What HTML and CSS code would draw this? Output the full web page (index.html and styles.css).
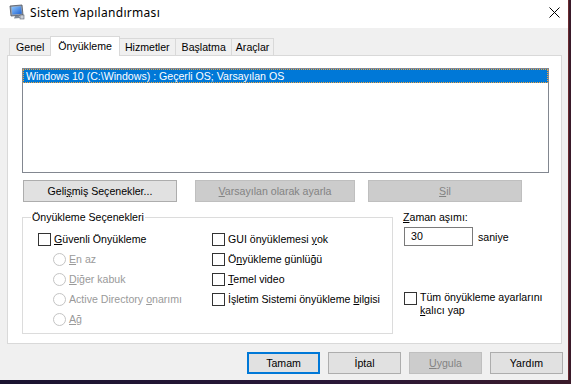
FILE: index.html
```html
<!DOCTYPE html>
<html lang="tr">
<head>
    <meta charset="UTF-8">
    <title>Sistem Yapılandırması</title>
    <link rel="stylesheet" href="styles.css">
</head>
<body>
    <div class="window">
        <div class="titlebar">
            <svg class="app-icon" width="16" height="16" viewBox="0 0 16 16">
                <defs>
                    <linearGradient id="scr" x1="0" y1="0" x2="1" y2="1">
                        <stop offset="0" stop-color="#8fc8ff"/>
                        <stop offset="1" stop-color="#1c5fd0"/>
                    </linearGradient>
                </defs>
                <path d="M1 2 L13 1 L14 11 L2 12 Z" fill="#9aa3b0" stroke="#4a5260" stroke-width="0.8"/>
                <path d="M2.6 3 L12 2.3 L12.8 9.8 L3.4 10.5 Z" fill="url(#scr)"/>
                <path d="M6 12 L10 11.6 L11 14 L5 14.6 Z" fill="#7d8794"/>
                <rect x="11" y="11" width="4" height="4" fill="#c9ced6" stroke="#5b6370" stroke-width="0.6"/>
            </svg>
            <span class="title">Sistem Yapılandırması</span>
            <svg class="close" width="11" height="11" viewBox="0 0 11 11">
                <path d="M0.5 0.5 L10.5 10.5 M10.5 0.5 L0.5 10.5" stroke="#000" stroke-width="1"/>
            </svg>
        </div>

        <div class="dialog">
            <div class="tabs">
                <div class="tab tab-general">Genel</div>
                <div class="tab active">Önyükleme</div>
                <div class="tab">Hizmetler</div>
                <div class="tab">Başlatma</div>
                <div class="tab tab-tools">Araçlar</div>
            </div>

            <div class="panel">
                <div class="listbox">
                    <div class="list-item selected">Windows 10 (C:\Windows) : Geçerli OS; Varsayılan OS</div>
                </div>

                <div class="list-actions">
                    <button class="btn btn-advanced">Geli<u>ş</u>miş Seçenekler...</button>
                    <button class="btn btn-default" disabled><u>V</u>arsayılan olarak ayarla</button>
                    <button class="btn btn-delete" disabled><u>S</u>il</button>
                </div>

                <div class="options">
                    <fieldset class="boot-options">
                        <legend>Önyükleme Seçenekleri</legend>
                        <div class="col col-left">
                            <div class="row check"><span class="box"></span><span><u>G</u>üvenli Önyükleme</span></div>
                            <div class="row radio disabled"><span class="dot"></span><span><u>E</u>n az</span></div>
                            <div class="row radio disabled"><span class="dot"></span><span><u>D</u>iğer kabuk</span></div>
                            <div class="row radio disabled"><span class="dot"></span><span>Active Directory <u>o</u>narımı</span></div>
                            <div class="row radio disabled"><span class="dot"></span><span><u>A</u>ğ</span></div>
                        </div>
                        <div class="col col-right">
                            <div class="row check"><span class="box"></span><span>GUI önyüklemesi <u>y</u>ok</span></div>
                            <div class="row check"><span class="box"></span><span>Ö<u>n</u>yükleme günlüğü</span></div>
                            <div class="row check"><span class="box"></span><span><u>T</u>emel video</span></div>
                            <div class="row check"><span class="box"></span><span>İşletim Sistemi önyükleme <u>b</u>ilgisi</span></div>
                        </div>
                    </fieldset>

                    <div class="side">
                        <div class="timeout-label"><u>Z</u>aman aşımı:</div>
                        <div class="timeout-row">
                            <div class="textbox">30</div>
                            <span>saniye</span>
                        </div>
                        <div class="check persist"><span class="box"></span><span>Tüm önyükleme ayarlarını<br><u>k</u>alıcı yap</span></div>
                    </div>
                </div>
            </div>

            <div class="footer">
                <button class="btn btn-ok">Tamam</button>
                <button class="btn">İptal</button>
                <button class="btn" disabled><u>U</u>ygula</button>
                <button class="btn">Yardım</button>
            </div>
        </div>
    </div>
</body>
</html>
```

FILE: styles.css
```css
body {
    margin: 0;
    width: 571px;
    height: 384px;
    overflow: hidden;
    background: linear-gradient(90deg, #1a1330, #2a1838 60%, #3a1a2a);
    font-family: 'Liberation Sans', Arial, sans-serif;
    font-size: 10.6px;
    color: #000;
}
.window {
    width: 568px;
    height: 380px;
    border-right: 1px solid #6a2a30;
    background-color: #f0f0f0;
}
.titlebar {
    height: 28px;
    background-color: #fff;
    display: flex;
    align-items: center;
}
.app-icon {
    margin-left: 9px;
    margin-top: -4px;
}
.title {
    margin-left: 5px;
    margin-top: -3px;
    font-family: 'Noto Sans', sans-serif;
    font-size: 12px;
    letter-spacing: 0.3px;
}
.close {
    margin-left: auto;
    margin-right: 8px;
    margin-top: -4px;
}
.dialog {
    padding-top: 8px;
}
.tabs {
    display: flex;
    align-items: flex-end;
    height: 19px;
    margin-left: 9px;
}
.tab {
    height: 17px;
    line-height: 16px;
    padding: 0 5px 0 6px;
    text-align: center;
    border: 1px solid #d9d9d9;
    border-bottom: none;
    box-sizing: border-box;
    background-color: #f0f0f0;
    margin-left: -1px;
}
.tab-general {
    margin-left: 0;
    padding: 0 7px 0 6px;
}
.tab-tools {
    padding: 0 4px;
}
.tab.active {
    height: 20px;
    line-height: 18px;
    margin: 0 -1px -1px -2px;
    padding: 0 7px;
    background-color: #fff;
    position: relative;
    z-index: 1;
}
.panel {
    margin-left: 7px;
    width: 555px;
    height: 289px;
    box-sizing: border-box;
    border: 1px solid #d9d9d9;
    background-color: #fff;
    padding: 12px 12px 0 14px;
}
.listbox {
    height: 105px;
    box-sizing: border-box;
    border: 1px solid #828790;
}
.list-item {
    height: 14px;
    line-height: 12px;
    padding-left: 2px;
    box-sizing: border-box;
}
.list-item.selected {
    background-color: #0078d7;
    color: #fff;
    border: 1px dotted #f3a33a;
}
.list-actions {
    display: flex;
    margin-top: 7px;
}
.btn {
    height: 22px;
    box-sizing: border-box;
    border: 1px solid #adadad;
    background-color: #e1e1e1;
    font: inherit;
    color: #000;
    padding: 0;
}
.btn:disabled {
    background-color: #cccccc;
    border-color: #bfbfbf;
    color: #838383;
}
.btn-advanced {
    width: 154px;
    margin-left: 1px;
}
.btn-default {
    width: 160px;
    margin-left: 18px;
}
.btn-delete {
    width: 154px;
    margin-left: 13px;
}
.options {
    display: flex;
    margin-top: 8px;
}
.boot-options {
    margin: 0;
    width: 371px;
    height: 124px;
    box-sizing: border-box;
    border: 1px solid #dcdcdc;
    padding: 5px 0 4px 15px;
    display: flex;
}
.boot-options legend {
    line-height: 14px;
    padding: 0 1px;
    margin-left: -7px;
}
.col-left {
    width: 174px;
}
.row {
    height: 20px;
    display: flex;
    align-items: center;
    white-space: nowrap;
}
.check, .radio {
    display: flex;
    align-items: center;
}
.box {
    width: 13px;
    height: 13px;
    box-sizing: border-box;
    border: 1px solid #333;
    background-color: #fff;
    margin-right: 3px;
    flex: none;
}
.radio {
    padding-left: 15px;
}
.dot {
    width: 13px;
    height: 13px;
    box-sizing: border-box;
    border: 1px solid #c4c4c4;
    border-radius: 50%;
    background-color: #fff;
    margin-right: 3px;
    flex: none;
}
.disabled {
    color: #9a9a9a;
}
.side {
    margin-left: 10px;
}
.timeout-label {
    line-height: 14px;
}
.timeout-row {
    display: flex;
    align-items: center;
    margin-top: 3px;
    margin-left: 1px;
}
.textbox {
    width: 69px;
    height: 19px;
    box-sizing: border-box;
    border: 1px solid #7a7a7a;
    background-color: #fff;
    line-height: 17px;
    padding-left: 6px;
    margin-right: 5px;
}
.persist {
    align-items: flex-start;
    margin-top: 45px;
    margin-left: 1px;
    line-height: 13px;
    white-space: nowrap;
}
.persist .box {
    margin-top: 1px;
}
.footer {
    display: flex;
    justify-content: flex-end;
    gap: 8px;
    margin-top: 8px;
    padding-right: 5px;
}
.footer .btn {
    width: 73px;
}
.btn-ok {
    border: 2px solid #0078d7;
}
```
